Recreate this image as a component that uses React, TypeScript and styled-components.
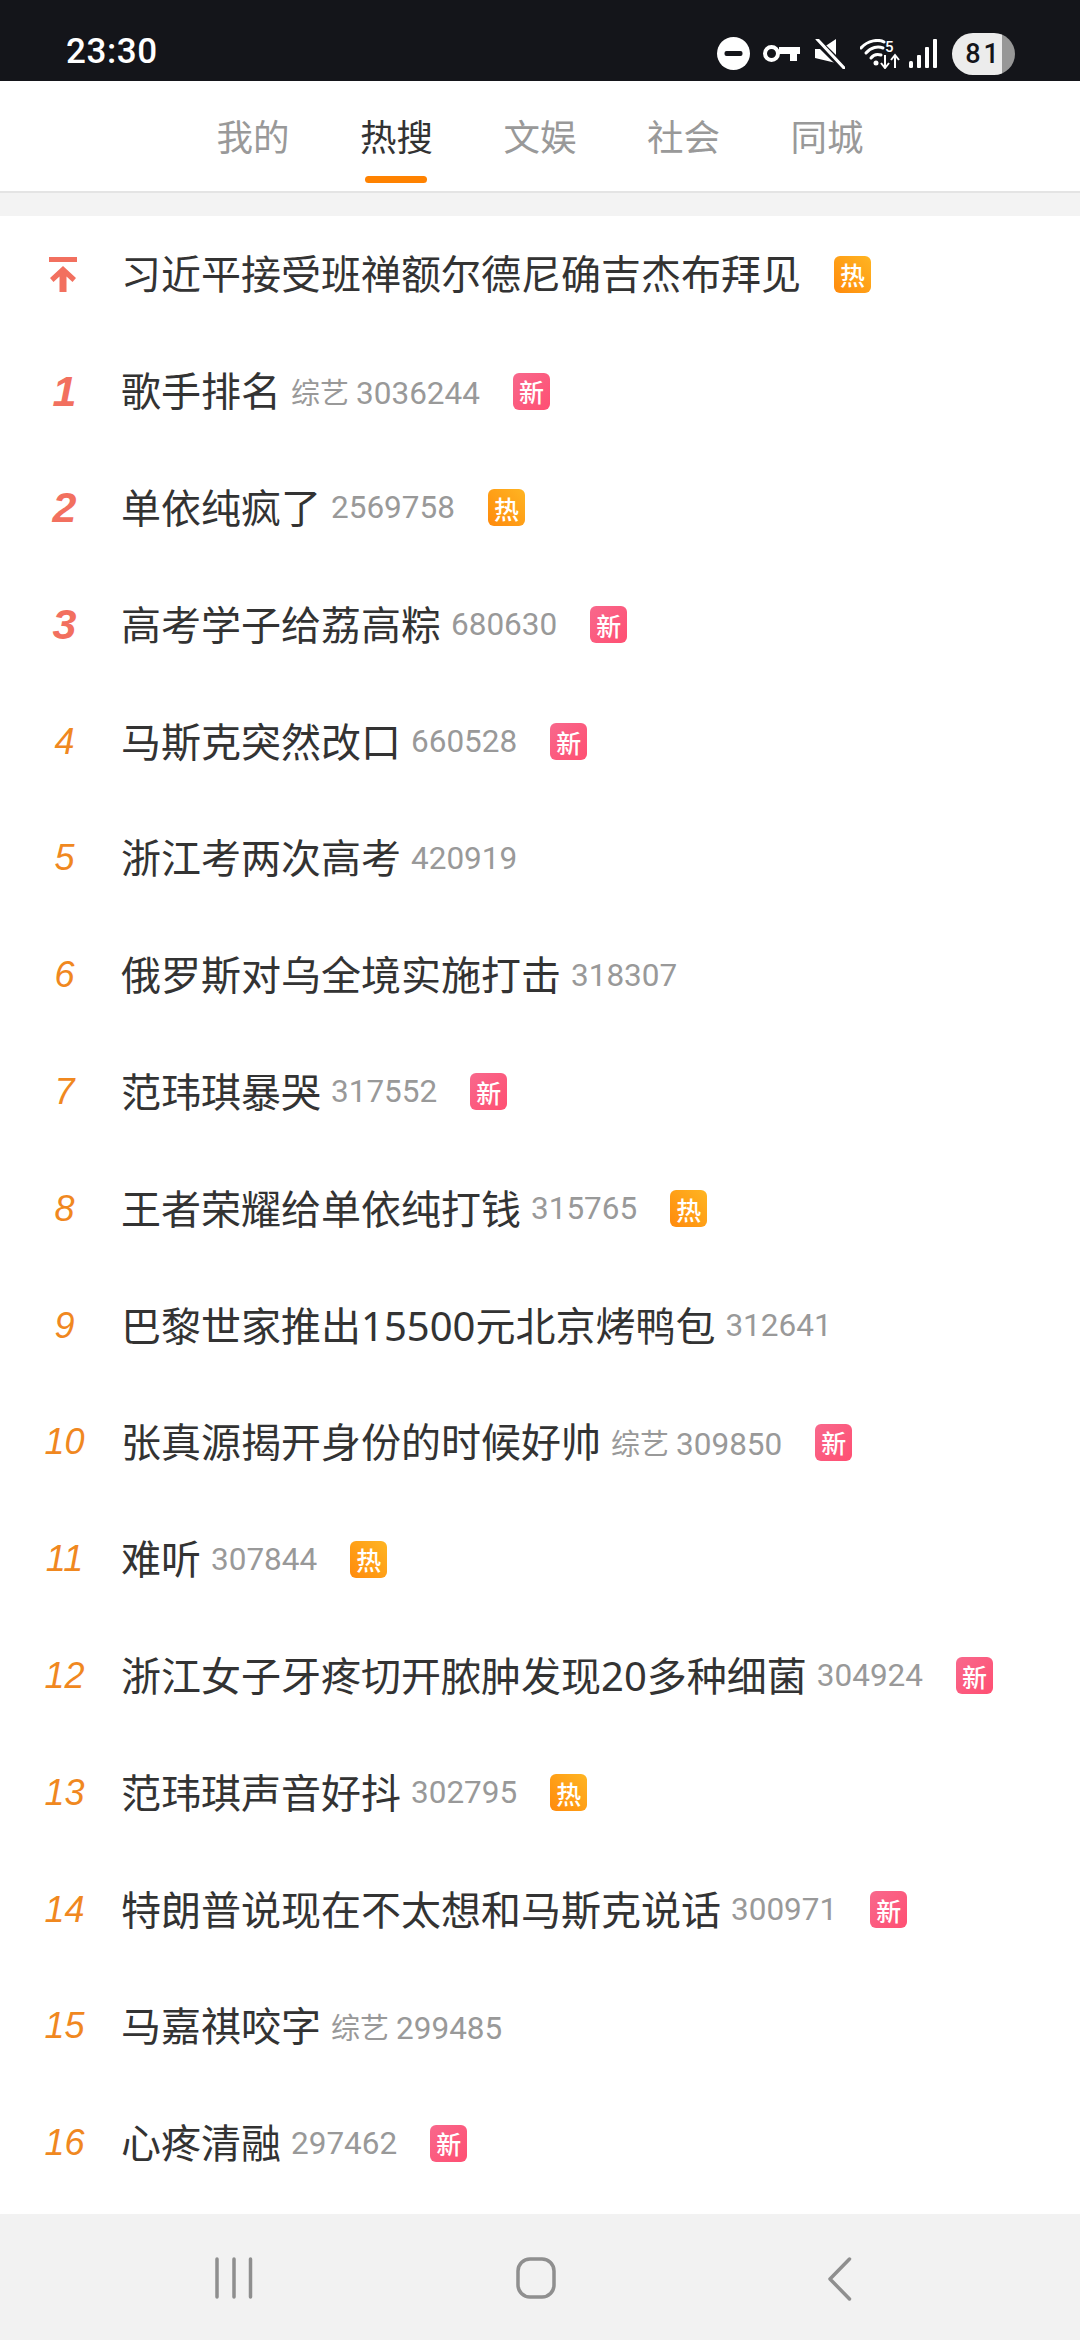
import styled, { createGlobalStyle } from 'styled-components';

const GlobalStyle = createGlobalStyle`
  html, body {
    margin: 0;
    padding: 0;
    background: #fff;
  }
  body {
    font-family: 'Noto Sans CJK SC', 'Roboto', sans-serif;
  }
`;

const Page = styled.div`
  display: flex;
  flex-direction: column;
  width: 1080px;
  height: 2340px;
  overflow: hidden;
  background: #fff;
`;

const StatusBar = styled.div`
  display: flex;
  align-items: center;
  justify-content: space-between;
  flex: none;
  height: 81px;
  padding: 26px 65px 0 66px;
  box-sizing: border-box;
  background: #14151a;
`;

const Time = styled.span`
  margin-bottom: 4px;
  font-family: 'Roboto', sans-serif;
  font-size: 35px;
  font-weight: 500;
  letter-spacing: 0.6px;
  color: #fff;
`;

const StatusIcons = styled.div`
  display: flex;
  align-items: center;
`;

const StatusIcon = styled.svg<{ $gap: number }>`
  display: block;
  margin-right: ${(props) => props.$gap}px;
`;

const Battery = styled.div`
  width: 63px;
  height: 42px;
  border-radius: 21px;
  overflow: hidden;
  background: linear-gradient(to right, #ececec 0 79%, #979797 79% 100%);
  text-align: center;
  font-family: 'Roboto', sans-serif;
  font-size: 27px;
  line-height: 42px;
  font-weight: 500;
  letter-spacing: 3px;
  color: #14151a;
`;

const TabBar = styled.div`
  display: flex;
  justify-content: center;
  flex: none;
  height: 110px;
  background: #fff;
`;

const Tab = styled.div<{ $active?: boolean }>`
  position: relative;
  width: 143.5px;
  height: 110px;
  text-align: center;
  font-size: 36.5px;
  line-height: 110px;
  color: ${(props) => (props.$active ? '#333' : '#999')};
`;

const TabMark = styled.span`
  position: absolute;
  left: 40.5px;
  top: 95px;
  width: 62px;
  height: 7px;
  border-radius: 4px;
  background: #ff8200;
`;

const Divider = styled.div`
  flex: none;
  height: 25px;
  box-sizing: border-box;
  border-top: 2px solid #e4e4e4;
  background: #f3f3f3;
`;

const List = styled.ul`
  flex: 1;
  list-style: none;
  margin: 0;
  padding: 0;
  background: #fff;
`;

const Row = styled.li`
  display: flex;
  align-items: center;
  height: 116.8px;
`;

const RankCell = styled.div`
  display: flex;
  align-items: center;
  justify-content: center;
  flex: none;
  width: 121px;
  padding-left: 8px;
  box-sizing: border-box;
`;

const Rank = styled.span<{ $top?: boolean }>`
  font-family: 'Liberation Sans', sans-serif;
  font-size: ${(props) => (props.$top ? 43 : 36)}px;
  font-style: italic;
  font-weight: ${(props) => (props.$top ? 700 : 400)};
  color: ${(props) => (props.$top ? '#f2705f' : '#f0881f')};
`;

const Pin = styled.svg`
  display: block;
  margin-right: 3px;
`;

const Title = styled.span`
  font-family: 'Noto Sans', 'Noto Sans CJK SC', sans-serif;
  font-size: 40px;
  line-height: 56px;
  color: #333;
`;

const Meta = styled.span`
  margin-left: 10px;
  font-family: 'Roboto', 'Noto Sans CJK SC', sans-serif;
  font-size: 31.5px;
  color: #999;
`;

const Tag = styled.span`
  font-size: 29px;
  margin-right: 7px;
`;

const Badge = styled.span<{ $kind: 'new' | 'hot' }>`
  display: flex;
  align-items: center;
  justify-content: center;
  flex: none;
  width: 37px;
  height: 37px;
  margin-left: 33px;
  border-radius: 6px;
  font-size: 25px;
  font-weight: 500;
  color: #fff;
  background: ${(props) =>
    props.$kind === 'new'
      ? 'linear-gradient(135deg, #f8688c, #ff4f72)'
      : 'linear-gradient(45deg, #ff8a0c, #ffb522)'};
`;

const NavBar = styled.div`
  display: flex;
  align-items: flex-start;
  flex: none;
  height: 126px;
  padding: 43px 0 0 214px;
  box-sizing: border-box;
  background: #f2f2f2;
`;

const NavIcon = styled.svg<{ $gap: number }>`
  display: block;
  margin-right: ${(props) => props.$gap}px;
`;

interface IHotItem {
  title: string;
  tag?: string;
  count?: number;
  badge?: 'new' | 'hot';
}

const items: IHotItem[] = [
  { title: '习近平接受班禅额尔德尼确吉杰布拜见', badge: 'hot' },
  { title: '歌手排名', tag: '综艺', count: 3036244, badge: 'new' },
  { title: '单依纯疯了', count: 2569758, badge: 'hot' },
  { title: '高考学子给荔高粽', count: 680630, badge: 'new' },
  { title: '马斯克突然改口', count: 660528, badge: 'new' },
  { title: '浙江考两次高考', count: 420919 },
  { title: '俄罗斯对乌全境实施打击', count: 318307 },
  { title: '范玮琪暴哭', count: 317552, badge: 'new' },
  { title: '王者荣耀给单依纯打钱', count: 315765, badge: 'hot' },
  { title: '巴黎世家推出15500元北京烤鸭包', count: 312641 },
  { title: '张真源揭开身份的时候好帅', tag: '综艺', count: 309850, badge: 'new' },
  { title: '难听', count: 307844, badge: 'hot' },
  { title: '浙江女子牙疼切开脓肿发现20多种细菌', count: 304924, badge: 'new' },
  { title: '范玮琪声音好抖', count: 302795, badge: 'hot' },
  { title: '特朗普说现在不太想和马斯克说话', count: 300971, badge: 'new' },
  { title: '马嘉祺咬字', tag: '综艺', count: 299485 },
  { title: '心疼清融', count: 297462, badge: 'new' },
];

const tabs = ['我的', '热搜', '文娱', '社会', '同城'];

function PinIcon() {
  return (
    <Pin width="28" height="35" viewBox="0 0 28 35" fill="#f2705f">
      <rect x="0" y="0" width="28" height="5" />
      <path d="M14 9 L27 21 L23.5 25 L17.5 19.5 V35 H10.5 V19.5 L4.5 25 L1 21 Z" />
    </Pin>
  );
}

function App() {
  return (
    <Page>
      <GlobalStyle />
      <StatusBar>
        <Time>23:30</Time>
        <StatusIcons>
          <StatusIcon $gap={13} width="33" height="33" viewBox="0 0 33 33">
            <circle cx="16.5" cy="16.5" r="16.5" fill="#fff" />
            <rect x="7.5" y="14" width="18" height="5" rx="2" fill="#14151a" />
          </StatusIcon>
          <StatusIcon $gap={15} width="37" height="17" viewBox="0 0 37 17">
            <circle cx="8.5" cy="8.5" r="6.5" fill="none" stroke="#fff" strokeWidth="4" />
            <path d="M16 2 H37 V9 H34 V16 H27 V9 H16 Z" fill="#fff" />
          </StatusIcon>
          <StatusIcon $gap={15} width="30" height="30" viewBox="0 0 30 30">
            <path d="M0 10 H6 L21 0 V24 L0 19 Z" fill="#fff" />
            <path d="M2 2 L28 28" stroke="#14151a" strokeWidth="7" />
            <path d="M2 0 L29 29" stroke="#fff" strokeWidth="3" strokeLinecap="round" />
          </StatusIcon>
          <StatusIcon $gap={9} width="40" height="30" viewBox="0 0 40 30" fill="none">
            <path d="M1 9 C8 1 19 0 24 3" stroke="#fff" strokeWidth="3" strokeLinecap="round" />
            <path d="M6 14 C11 8 18 7 23 9" stroke="#fff" strokeWidth="3" strokeLinecap="round" />
            <path d="M11 19 C14 15 18 15 21 16" stroke="#fff" strokeWidth="3" strokeLinecap="round" />
            <circle cx="16" cy="24" r="2.5" fill="#fff" />
            <text x="25" y="13" fontFamily="Roboto, sans-serif" fontSize="15" fontWeight="500" fill="#fff">5</text>
            <path d="M25 16 V28 M21 24 L25 29 L29 24" stroke="#fff" strokeWidth="2" />
            <path d="M35 29 V17 M31 21 L35 16 L39 21" stroke="#fff" strokeWidth="2" />
          </StatusIcon>
          <StatusIcon $gap={14} width="29" height="29" viewBox="0 0 29 29" fill="#fff">
            <rect x="0" y="22" width="4" height="7" rx="1.5" />
            <rect x="8" y="16" width="4" height="13" rx="1" />
            <rect x="16" y="8" width="4" height="21" rx="1" />
            <rect x="24" y="0" width="4" height="29" rx="1" />
          </StatusIcon>
          <Battery>81</Battery>
        </StatusIcons>
      </StatusBar>
      <TabBar>
        {tabs.map((tab) => (
          <Tab key={tab} $active={tab === '热搜'}>
            {tab}
            {tab === '热搜' && <TabMark />}
          </Tab>
        ))}
      </TabBar>
      <Divider />
      <List>
        {items.map((item, index) => (
          <Row key={item.title}>
            <RankCell>
              {index === 0 ? <PinIcon /> : <Rank $top={index <= 3}>{index}</Rank>}
            </RankCell>
            <Title>{item.title}</Title>
            {item.count && (
              <Meta>
                {item.tag && <Tag>{item.tag}</Tag>}
                {item.count}
              </Meta>
            )}
            {item.badge && (
              <Badge $kind={item.badge}>{item.badge === 'new' ? '新' : '热'}</Badge>
            )}
          </Row>
        ))}
      </List>
      <NavBar>
        <NavIcon $gap={262} width="40" height="42" viewBox="0 0 40 42" stroke="#8f8f8f" strokeWidth="3.5" strokeLinecap="round">
          <path d="M3 2 V40 M20 2 V40 M36.5 2 V40" />
        </NavIcon>
        <NavIcon $gap={271} width="40" height="42" viewBox="0 0 40 42" fill="none" stroke="#8f8f8f" strokeWidth="3.5">
          <rect x="2" y="2" width="36" height="38" rx="12" />
        </NavIcon>
        <NavIcon $gap={0} width="25" height="44" viewBox="0 0 25 44" fill="none" stroke="#8f8f8f" strokeWidth="3.5" strokeLinecap="round" strokeLinejoin="round">
          <path d="M22.5 2 L3 22 L22.5 42" />
        </NavIcon>
      </NavBar>
    </Page>
  );
}

export default App;
